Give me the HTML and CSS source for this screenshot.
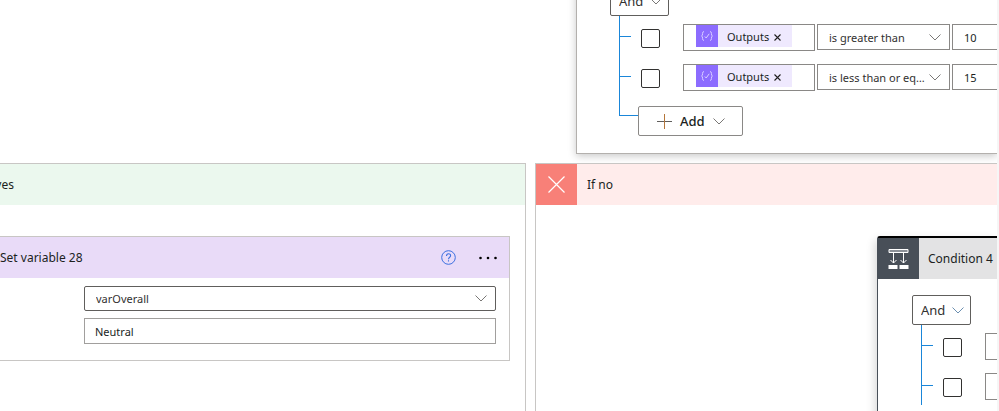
FILE: index.html
```html
<!DOCTYPE html>
<html lang="en">

<head>
    <meta charset="UTF-8">
    <meta name="viewport" content="width=device-width, initial-scale=1.0">
    <title>Flow designer</title>
    <link rel="stylesheet" href="styles.css">
</head>

<body>
    <svg class="sprite" aria-hidden="true">
        <symbol id="chevron" viewBox="0 0 12 7">
            <path d="M0.5 0.5 L6 6 L11.5 0.5" fill="none" stroke="currentColor" />
        </symbol>
        <symbol id="expression" viewBox="0 0 22 22">
            <path d="M8 6.5 C5.5 6.5 7.5 10.5 5.5 11 C7.5 11.5 5.5 15.5 8 15.5 M14 6.5 C16.5 6.5 14.5 10.5 16.5 11 C14.5 11.5 16.5 15.5 14 15.5 M8.8 11.5 L10.2 13 L13.2 8.8"
                fill="none" stroke="#d9ceff" />
        </symbol>
    </svg>

    <main class="canvas">
        <div class="top-row">
            <section class="card condition" aria-label="Condition">
                <div class="condition-body">
                    <div class="select operator">
                        <select aria-label="Group operator">
                            <option>And</option>
                            <option>Or</option>
                        </select>
                        <svg class="chevron"><use href="#chevron" /></svg>
                    </div>
                    <div class="rule">
                        <span class="branch"></span>
                        <input type="checkbox" class="check" aria-label="Select row 1">
                        <div class="token-box">
                            <span class="token">
                                <svg class="token-icon"><use href="#expression" /></svg>
                                Outputs
                                <button class="remove" aria-label="Remove Outputs"><svg viewBox="0 0 7 7"><path d="M0.5 0.5 L6.5 6.5 M6.5 0.5 L0.5 6.5" fill="none" stroke="currentColor" stroke-width="1.1" /></svg></button>
                            </span>
                        </div>
                        <div class="select comparison">
                            <select aria-label="Comparison 1">
                                <option>is greater than</option>
                            </select>
                            <svg class="chevron"><use href="#chevron" /></svg>
                        </div>
                        <input type="text" class="value" aria-label="Value 1" value="10">
                    </div>
                    <div class="rule">
                        <span class="branch"></span>
                        <input type="checkbox" class="check" aria-label="Select row 2">
                        <div class="token-box">
                            <span class="token">
                                <svg class="token-icon"><use href="#expression" /></svg>
                                Outputs
                                <button class="remove" aria-label="Remove Outputs"><svg viewBox="0 0 7 7"><path d="M0.5 0.5 L6.5 6.5 M6.5 0.5 L0.5 6.5" fill="none" stroke="currentColor" stroke-width="1.1" /></svg></button>
                            </span>
                        </div>
                        <div class="select comparison">
                            <select aria-label="Comparison 2">
                                <option>is less than or equal to</option>
                            </select>
                            <svg class="chevron"><use href="#chevron" /></svg>
                        </div>
                        <input type="text" class="value" aria-label="Value 2" value="15">
                    </div>
                    <div class="rule last">
                        <span class="branch end"></span>
                        <button class="add">
                            <svg class="plus" viewBox="0 0 15 15"><path d="M0 7.5 H15" stroke="#605e5c" /><path d="M7.5 0 V15" stroke="#b5763a" /></svg>
                            Add
                            <svg class="chevron"><use href="#chevron" /></svg>
                        </button>
                    </div>
                </div>
            </section>
        </div>

        <div class="branches">
            <section class="panel yes">
                <header class="panel-header">
                    <h2>If yes</h2>
                </header>
                <article class="card variable">
                    <header class="variable-header">
                        <h3>Set variable 28</h3>
                        <button class="icon-button" aria-label="Help">
                            <svg class="help" viewBox="0 0 15 15"><circle cx="7.5" cy="7.5" r="6.8" fill="none" stroke="#3b6fe0" /><path d="M5.5 6 C5.5 3 9.6 3 9.6 5.7 C9.6 7.3 7.5 7.2 7.5 9.2 M7.5 10.3 V11.5" fill="none" stroke="#3b6fe0" stroke-width="1.1" /></svg>
                        </button>
                        <button class="icon-button" aria-label="More">
                            <svg class="dots" viewBox="0 0 18 4"><circle cx="1.5" cy="2" r="1.3" /><circle cx="9" cy="2" r="1.3" /><circle cx="16.5" cy="2" r="1.3" /></svg>
                        </button>
                    </header>
                    <div class="fields">
                        <div class="select name">
                            <select aria-label="Name">
                                <option>varOverall</option>
                            </select>
                            <svg class="chevron"><use href="#chevron" /></svg>
                        </div>
                        <input type="text" class="text" aria-label="Value" value="Neutral">
                    </div>
                </article>
            </section>

            <section class="panel no">
                <header class="panel-header">
                    <svg class="panel-icon" viewBox="0 0 41 41"><path d="M12.5 12.5 L28.5 28.5 M28.5 12.5 L12.5 28.5" fill="none" stroke="#fff" stroke-width="1.2" /></svg>
                    <h2>If no</h2>
                </header>
                <div class="nested">
                    <article class="card condition selected">
                        <header class="condition-header">
                            <svg class="condition-icon" viewBox="0 0 41 41">
                                <path d="M11 11.5 H30 V14.5 H11 Z" fill="#8b9097" stroke="#fff" />
                                <path d="M15.5 15 V25 M12.5 22 L15.5 25 L18.5 22 M25.5 15 V25 M22.5 22 L25.5 25 L28.5 22" fill="none" stroke="#fff" />
                                <path d="M10.5 27 H19.5 V31 H10.5 Z M21.5 27 H30.5 V31 H21.5 Z" fill="#fff" />
                            </svg>
                            <h3>Condition 4</h3>
                        </header>
                        <div class="condition-body">
                            <div class="select operator">
                                <select aria-label="Group operator">
                                    <option>And</option>
                                    <option>Or</option>
                                </select>
                                <svg class="chevron blue"><use href="#chevron" /></svg>
                            </div>
                            <div class="rule">
                                <span class="branch"></span>
                                <input type="checkbox" class="check" aria-label="Select row 1">
                                <div class="token-box"></div>
                            </div>
                            <div class="rule">
                                <span class="branch"></span>
                                <input type="checkbox" class="check" aria-label="Select row 2">
                                <div class="token-box"></div>
                            </div>
                        </div>
                    </article>
                </div>
            </section>
        </div>
    </main>
</body>

</html>
```

FILE: styles.css
```css
* {
    box-sizing: border-box;
}

body {
    margin: 0;
    height: 100vh;
    overflow: hidden;
    padding-right: 2px;
    background-color: #f6f6f6;
    color: #201f1e;
    font-family: "Segoe UI", "Noto Sans", sans-serif;
    font-size: 12px;
}

h2,
h3 {
    margin: 0;
    font-size: 12px;
    font-weight: normal;
    white-space: nowrap;
}

button,
input,
select {
    margin: 0;
    font: inherit;
    color: inherit;
}

svg {
    display: block;
    flex: none;
}

.sprite {
    display: none;
}

.canvas {
    display: flex;
    flex-direction: column;
    height: 100%;
    overflow: hidden;
    background-color: #fff;
}

.card {
    background-color: #fff;
    border: 1px solid #c8c6c4;
}

.chevron {
    width: 12px;
    height: 7px;
    color: #797775;
    pointer-events: none;
}

.chevron.blue {
    color: #6c8fb0;
}

/* Top condition, scrolled partly out of view */
.top-row {
    display: grid;
    grid-template-columns: minmax(0, 576fr) minmax(0, 421fr);
    margin-top: -32px;
    margin-bottom: 9px;
}

.top-row .card {
    grid-column: 2;
    border-color: #b3b0ad;
    border-right: none;
    box-shadow: 0 2px 8px rgba(0, 0, 0, 0.22);
}

.condition-body {
    padding: 17px 0 17px 33px;
}

/* Drop-downs */
.select {
    display: grid;
    align-items: center;
    flex: none;
}

.select select,
.select .chevron {
    grid-area: 1 / 1;
}

.select select {
    appearance: none;
    width: 100%;
    height: 26px;
    padding: 0 24px 0 11px;
    border: 1px solid #8a8886;
    border-radius: 0;
    background-color: #fff;
    font-size: 11px;
    color: #323130;
    text-overflow: ellipsis;
}

.select .chevron {
    justify-self: end;
    margin-right: 9px;
}

.operator {
    width: 59px;
}

.select.operator select {
    height: 30px;
    padding: 0 8px;
    border-color: #605e5c;
    border-radius: 2px;
    font-size: 13px;
}

.operator .chevron {
    margin-right: 7px;
}

.comparison {
    width: 133px;
}

/* Rule tree */
.rule {
    display: flex;
    align-items: flex-start;
    height: 40px;
    margin-left: 9px;
}

.branch {
    flex: none;
    width: 12px;
    height: 40px;
    background:
        linear-gradient(#1a86d9, #1a86d9) 0 0 / 1px 100% no-repeat,
        linear-gradient(#1a86d9, #1a86d9) 0 20px / 100% 1px no-repeat;
}

.branch.end {
    width: 19px;
    height: 20px;
    background:
        linear-gradient(#1a86d9, #1a86d9) 0 0 / 1px 100% no-repeat,
        linear-gradient(#1a86d9, #1a86d9) 0 19px / 100% 1px no-repeat;
}

.check {
    appearance: none;
    flex: none;
    width: 19px;
    height: 19px;
    margin: 13px 23px 0 10px;
    border: 1px solid #323130;
    border-radius: 2px;
    background-color: #fff;
}

.token-box,
.rule .select,
.value {
    margin-top: 8px;
}

.token-box {
    flex: none;
    width: 132px;
    height: 27px;
    margin-right: 2px;
    padding-left: 12px;
    border: 1px solid #8a8886;
}

.token {
    display: flex;
    align-items: center;
    width: 96px;
    height: 22px;
    background-color: #efe9fe;
    font-size: 11px;
}

.token-icon {
    width: 22px;
    height: 22px;
    margin-right: 9px;
    background-color: #8c6cff;
}

.remove {
    margin-left: 5px;
    padding: 2px 0 0;
    border: none;
    background: none;
}

.remove svg {
    width: 7px;
    height: 7px;
}

.value {
    flex: none;
    width: 132px;
    height: 26px;
    margin-left: 2px;
    padding: 0 11px;
    border: 1px solid #8a8886;
    font-size: 11px;
}

.add {
    display: flex;
    align-items: center;
    gap: 8px;
    width: 105px;
    height: 30px;
    margin-top: 10px;
    padding: 0 18px;
    border: 1px solid #8a8886;
    border-radius: 2px;
    background-color: #fff;
    font-size: 13px;
    font-weight: 500;
}

.plus {
    width: 15px;
    height: 15px;
}

/* Yes / no branches */
.branches {
    display: grid;
    grid-template-columns: minmax(0, 526fr) minmax(0, 462fr);
    gap: 9px;
    flex: 1;
}

.panel {
    border: 1px solid #c8c6c4;
    border-bottom: none;
}

.panel-header {
    display: flex;
    align-items: center;
    height: 41px;
    margin-bottom: 31px;
}

.yes {
    border-left: none;
}

.yes .panel-header {
    background-color: #ebf8ee;
}

.yes h2 {
    margin-left: -16px;
}

.no {
    border-right: none;
}

.no .panel-header {
    gap: 10px;
    background-color: #ffeceb;
}

.panel-icon {
    width: 41px;
    height: 41px;
    background-color: #f88078;
}

.variable {
    margin-right: 15px;
    border-left: none;
}

.variable-header {
    display: flex;
    align-items: center;
    height: 41px;
    padding-right: 12px;
    background-color: #e9dbf8;
}

.variable-header h3 {
    flex: 1;
}

.icon-button {
    margin-left: 23px;
    padding: 0;
    border: none;
    background: none;
}

.help {
    width: 15px;
    height: 15px;
}

.dots {
    width: 18px;
    height: 4px;
}

.fields {
    display: flex;
    flex-direction: column;
    gap: 7px;
    padding: 8px 13px 16px 84px;
}

.name select {
    height: 25px;
    border-color: #605e5c;
    border-radius: 2px;
}

.text {
    height: 26px;
    padding: 0 10px;
    border: 1px solid #a19f9d;
    font-size: 11px;
}

.nested {
    display: grid;
    grid-template-columns: minmax(0, 341fr) minmax(0, 120fr);
}

.nested .card {
    grid-column: 2;
    height: 220px;
    border: 1px solid #484f58;
    border-top: 2px solid #000;
    border-right: none;
    border-radius: 3px 0 0 0;
    box-shadow: -2px 4px 10px rgba(0, 0, 0, 0.16);
}

.nested .condition-body {
    padding-top: 16px;
    padding-left: 34px;
}

.condition-header {
    display: flex;
    align-items: center;
    gap: 9px;
    height: 41px;
    background-color: #e3e3e4;
}

.condition-icon {
    width: 41px;
    height: 41px;
    background-color: #484f58;
}
```
